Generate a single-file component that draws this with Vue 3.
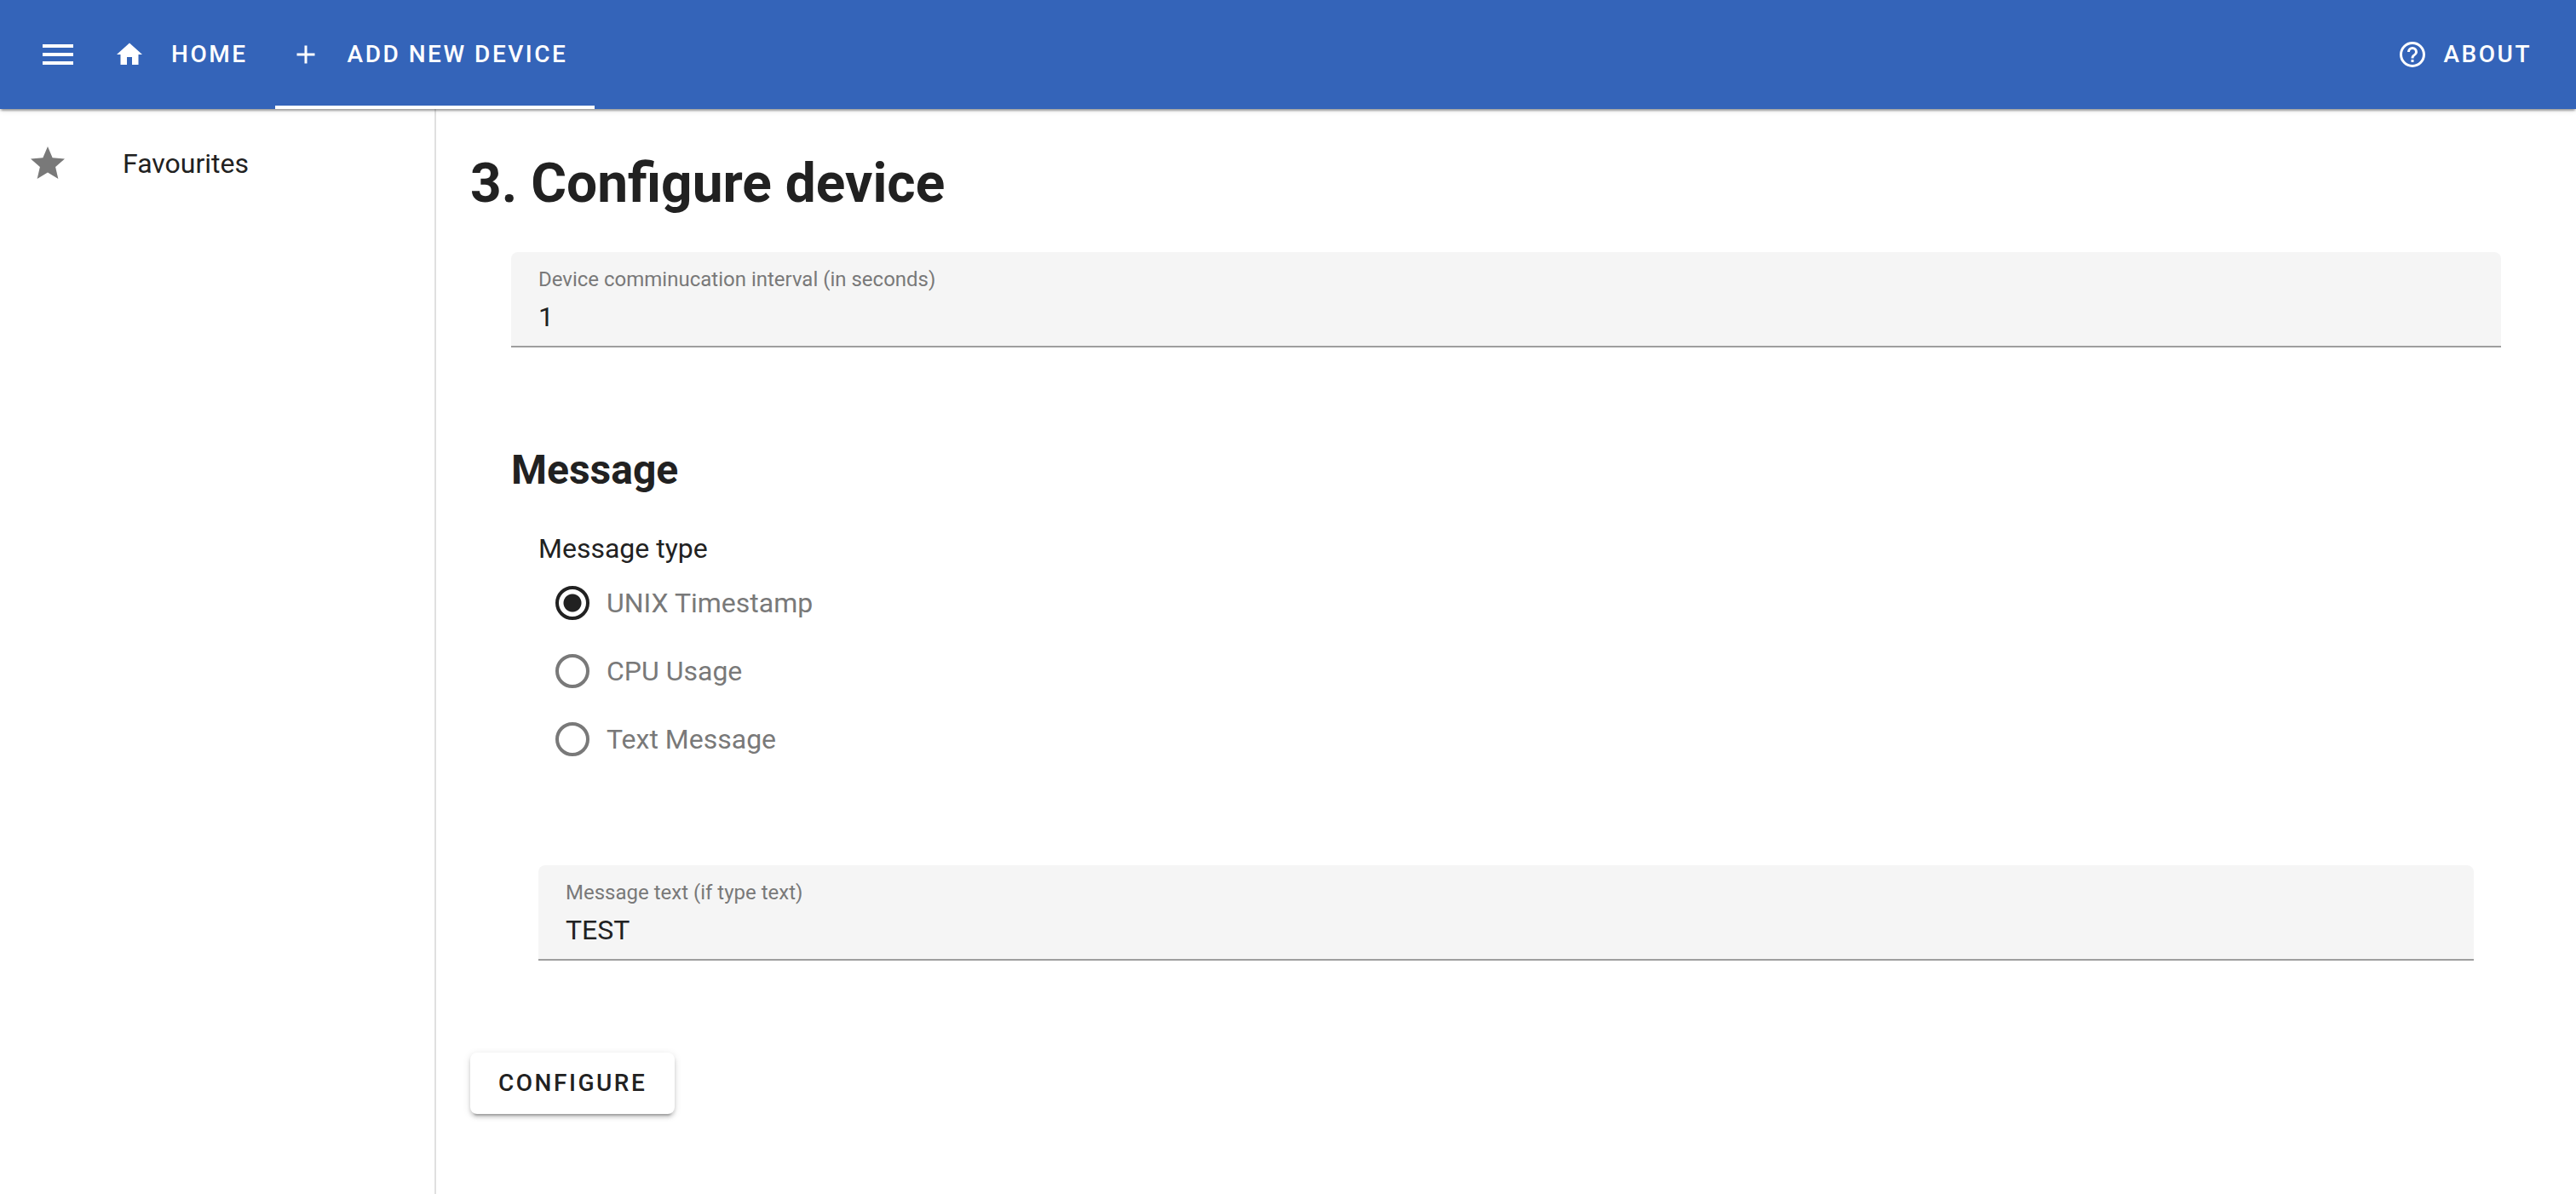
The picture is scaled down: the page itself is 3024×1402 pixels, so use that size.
<script setup>
import { ref } from 'vue'

const interval = ref('1')
const messageText = ref('TEST')
const messageType = ref('timestamp')
const messageTypes = [
  { value: 'timestamp', label: 'UNIX Timestamp' },
  { value: 'cpu', label: 'CPU Usage' },
  { value: 'text', label: 'Text Message' },
]
</script>

<template>
  <div class="app">
    <header class="toolbar">
      <button class="menu" type="button" aria-label="Menu">
        <svg class="icon" viewBox="0 0 24 24"><path d="M3,6H21V8H3V6M3,11H21V13H3V11M3,16H21V18H3V16Z" /></svg>
      </button>
      <nav class="tabs">
        <a class="tab" href="#home">
          <svg class="icon small" viewBox="0 0 24 24"><path d="M10,20V14H14V20H19V12H22L12,3L2,12H5V20H10Z" /></svg>
          Home
        </a>
        <a class="tab active" href="#add" aria-current="page">
          <svg class="icon small" viewBox="0 0 24 24"><path d="M19,13H13V19H11V13H5V11H11V5H13V11H19V13Z" /></svg>
          Add new device
        </a>
      </nav>
      <a class="about" href="#about">
        <svg class="icon small" viewBox="0 0 24 24"><path d="M11,18H13V16H11V18M12,2A10,10 0 0,0 2,12A10,10 0 0,0 12,22A10,10 0 0,0 22,12A10,10 0 0,0 12,2M12,20C7.59,20 4,16.41 4,12C4,7.59 7.59,4 12,4C16.41,4 20,7.59 20,12C20,16.41 16.41,20 12,20M12,6A4,4 0 0,0 8,10H10A2,2 0 0,1 12,8A2,2 0 0,1 14,10C14,12 11,11.75 11,15H13C13,12.75 16,12.5 16,10A4,4 0 0,0 12,6Z" /></svg>
        About
      </a>
    </header>

    <div class="body">
      <aside class="sidebar">
        <a class="item" href="#favourites">
          <svg class="icon" viewBox="0 0 24 24"><path d="M12,17.27L18.18,21L16.54,13.97L22,9.24L14.81,8.62L12,2L9.19,8.62L2,9.24L7.45,13.97L5.82,21L12,17.27Z" /></svg>
          <span>Favourites</span>
        </a>
      </aside>

      <main class="content">
        <h1>3. Configure device</h1>
        <form @submit.prevent>
          <div class="settings">
            <div class="field">
              <label for="interval">Device comminucation interval (in seconds)</label>
              <input id="interval" v-model="interval" type="text" />
            </div>

            <h2>Message</h2>
            <div class="message">
              <fieldset>
                <legend>Message type</legend>
                <label v-for="t in messageTypes" :key="t.value" class="option">
                  <input v-model="messageType" type="radio" name="message-type" :value="t.value" />
                  {{ t.label }}
                </label>
              </fieldset>
              <div class="field">
                <label for="message-text">Message text (if type text)</label>
                <input id="message-text" v-model="messageText" type="text" />
              </div>
            </div>
          </div>
          <button class="submit" type="submit">Configure</button>
        </form>
      </main>
    </div>
  </div>
</template>

<style>
body {
  margin: 0;
  background: #fff;
}
</style>

<style scoped>
.app {
  display: flex;
  flex-direction: column;
  min-height: 100vh;
  box-sizing: border-box;
  font-family: Roboto, sans-serif;
  font-size: 32px;
  line-height: 48px;
  color: #212121;
}
a {
  color: inherit;
  text-decoration: none;
}
button,
input {
  font: inherit;
  color: inherit;
}
.icon {
  flex: none;
  width: 48px;
  height: 48px;
  fill: currentColor;
}
.icon.small {
  width: 36px;
  height: 36px;
}

.toolbar {
  display: flex;
  height: 128px;
  position: relative;
  z-index: 1;
  background: #3464b9;
  color: #fff;
  box-shadow:
    0 4px 2px -2px rgba(0, 0, 0, 0.2),
    0 2px 2px 0 rgba(0, 0, 0, 0.14),
    0 2px 6px 0 rgba(0, 0, 0, 0.12);
}
.menu {
  display: flex;
  align-items: center;
  padding: 0 24px 0 44px;
  border: 0;
  background: none;
}
.tabs {
  display: flex;
}
.tab,
.about,
.submit {
  display: flex;
  align-items: center;
  font-size: 28px;
  font-weight: 500;
  letter-spacing: 0.09em;
  text-transform: uppercase;
}
.tab {
  gap: 31px;
  padding: 4px 32px 0 18px;
  border-bottom: 4px solid transparent;
}
.tab.active {
  border-bottom-color: #fff;
}
.about {
  gap: 18px;
  margin-left: auto;
  padding-right: 52px;
}

.body {
  display: flex;
  flex: 1;
}
.sidebar {
  flex: none;
  width: 510px;
  padding-top: 16px;
  border-right: 2px solid #e0e0e0;
}
.item {
  display: flex;
  align-items: center;
  gap: 64px;
  height: 96px;
  padding: 0 32px;
}
.item .icon {
  color: #797979;
}

.content {
  flex: 1;
  min-width: 0;
  padding: 40px 40px 0;
}
h1,
h2 {
  margin: 0;
  font-weight: 700;
}
h1 {
  font-size: 64px;
  line-height: 96px;
}
h2 {
  margin: 108px 0 32px;
  font-size: 48px;
  line-height: 72px;
}
.settings {
  padding: 32px 48px 0;
}
.field {
  display: flex;
  flex-direction: column;
  height: 112px;
  box-sizing: border-box;
  padding: 16px 32px 0;
  border-bottom: 2px solid #9e9e9e;
  border-radius: 8px 8px 0 0;
  background: #f5f5f5;
}
.field label {
  font-size: 24px;
  line-height: 32px;
  color: #797979;
}
.field input {
  height: 56px;
  padding: 0;
  border: 0;
  outline: 0;
  background: none;
}
.message {
  padding: 0 32px;
}
fieldset {
  display: flex;
  flex-direction: column;
  gap: 32px;
  margin: 0 0 124px;
  padding: 0;
  border: 0;
}
legend {
  padding: 0 0 16px;
}
.option {
  display: flex;
  align-items: center;
  gap: 20px;
  padding-left: 20px;
  color: #797979;
}
.option input {
  appearance: none;
  width: 40px;
  height: 40px;
  margin: 0;
  box-sizing: border-box;
  border: 4px solid #797979;
  border-radius: 50%;
}
.option input:checked {
  border-color: #212121;
  background: radial-gradient(circle, #212121 10px, transparent 11px);
}
.submit {
  height: 72px;
  margin-top: 108px;
  padding: 0 33px;
  border: 0;
  border-radius: 8px;
  background: #fff;
  box-shadow:
    0 6px 2px -4px rgba(0, 0, 0, 0.2),
    0 4px 4px 0 rgba(0, 0, 0, 0.14),
    0 2px 10px 0 rgba(0, 0, 0, 0.12);
}
</style>
